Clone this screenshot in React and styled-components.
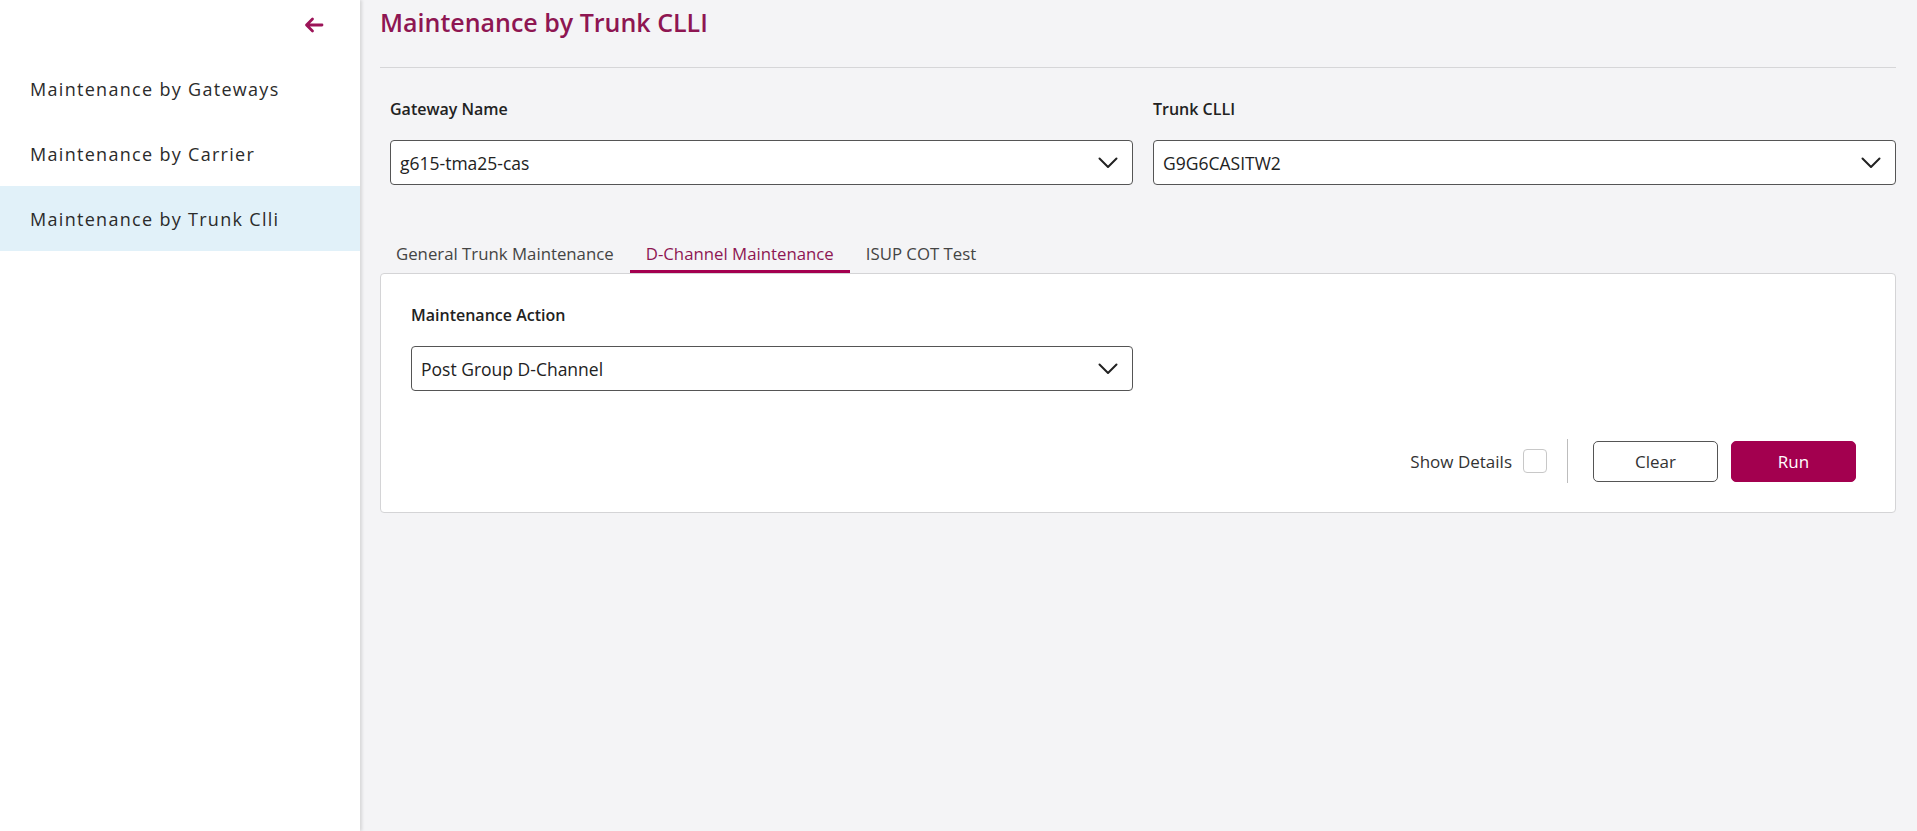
import React from 'react';
import styled, { createGlobalStyle } from 'styled-components';

const GlobalStyle = createGlobalStyle`
    html, body {
        margin: 0;
        padding: 0;
        height: 100%;
    }
    body {
        font-family: "Open Sans", "Noto Sans", "Liberation Sans", sans-serif;
        color: #222;
    }
    #root {
        height: 100%;
    }
`

const Layout = styled.div`
    display: flex;
    height: 100vh;
    background: #f4f4f6;
`

const SideBar = styled.aside`
    width: 360px;
    flex-shrink: 0;
    background: #fff;
    box-shadow: 2px 0 3px rgba(0, 0, 0, 0.12);
    z-index: 1;
`

const SideHead = styled.div`
    height: 56px;
    display: flex;
    justify-content: flex-end;
    align-items: flex-start;
    padding: 17px 36px 0 0;
    box-sizing: border-box;
`

const BackBtn = styled.button`
    border: none;
    background: none;
    padding: 0;
    display: flex;
    cursor: pointer;
    color: #9c1458;
`

const MenuItem = styled.div`
    height: 65px;
    display: flex;
    align-items: center;
    padding-left: 30px;
    font-size: 18px;
    letter-spacing: 1.3px;
    color: #2b2b2b;
    background: ${({ active }) => (active ? '#e1f1f9' : 'transparent')};
    cursor: pointer;
`

const Main = styled.main`
    flex: 1;
    padding: 0 21px 0 20px;
    min-width: 0;
`

const Title = styled.h1`
    margin: 0;
    padding-top: 4px;
    font-size: 25px;
    line-height: 36px;
    font-weight: 600;
    color: #8e1652;
`

const Divider = styled.hr`
    margin: 27px 0 0;
    border: none;
    border-top: 1px solid #d6d6d8;
`

const FormGrid = styled.div`
    display: grid;
    grid-template-columns: 1fr 1fr;
    column-gap: 20px;
    padding: 31px 0 0 10px;
`

const Field = styled.div`
    display: flex;
    flex-direction: column;
    gap: 21px;
`

const Label = styled.label`
    font-size: 16px;
    line-height: 20px;
    font-weight: 600;
    color: #222;
`

const SelectBox = styled.div`
    height: 45px;
    box-sizing: border-box;
    border: 1px solid #555;
    border-radius: 4px;
    background: #fff;
    display: flex;
    align-items: center;
    justify-content: space-between;
    padding: 0 14px 0 9px;
    font-size: 17.5px;
    color: #222;
    width: ${({ half }) => (half ? '722px' : 'auto')};
`

const Tabs = styled.div`
    display: flex;
    margin-top: 47px;
    height: 41px;
`

const Tab = styled.div`
    padding: 5px 16px 0;
    display: flex;
    align-items: center;
    font-size: 16.8px;
    color: ${({ active }) => (active ? '#8e1652' : '#444')};
    border-bottom: 3px solid ${({ active }) => (active ? '#a3004f' : 'transparent')};
    cursor: pointer;
`

const Card = styled.section`
    background: #fff;
    border: 1px solid #d4d4d6;
    border-radius: 4px;
    padding: 31px 39px 29px 30px;
    display: flex;
    flex-direction: column;
`

const Actions = styled.div`
    display: flex;
    justify-content: flex-end;
    align-items: center;
    margin-top: 48px;
`

const CheckLabel = styled.label`
    display: flex;
    align-items: center;
    gap: 11px;
    font-size: 17px;
    color: #333;
`

const CheckBox = styled.span`
    width: 22px;
    height: 22px;
    border: 1px solid #c8c8c8;
    border-radius: 4px;
    background: #fff;
`

const VLine = styled.span`
    width: 1px;
    height: 44px;
    background: #bdbdbd;
    margin: 0 25px 0 20px;
`

const Button = styled.button`
    width: 125px;
    height: 41px;
    border-radius: 5px;
    font-family: inherit;
    font-size: 17px;
    cursor: pointer;
    border: 1px solid ${({ primary }) => (primary ? '#a3004f' : '#555')};
    background: ${({ primary }) => (primary ? '#a3004f' : '#fff')};
    color: ${({ primary }) => (primary ? '#fff' : '#333')};
    & + & {
        margin-left: 13px;
    }
`

const Chevron = () => (
    <svg width="20" height="12" viewBox="0 0 20 12" fill="none">
        <path d="M1.5 1.5 L10 10 L18.5 1.5" stroke="#222" strokeWidth="2" strokeLinecap="round" strokeLinejoin="round" />
    </svg>
)

const Select = ({ value, half }) => (
    <SelectBox half={half}>
        <span>{value}</span>
        <Chevron />
    </SelectBox>
)

const menu = ['Maintenance by Gateways', 'Maintenance by Carrier', 'Maintenance by Trunk Clli']
const tabs = ['General Trunk Maintenance', 'D-Channel Maintenance', 'ISUP COT Test']

const App = () => {
    return (
        <>
            <GlobalStyle />
            <Layout>
                <SideBar>
                    <SideHead>
                        <BackBtn>
                            <svg width="20" height="16" viewBox="0 0 20 16" fill="none">
                                <path d="M18 8 H3 M8.5 2 L2.5 8 L8.5 14" stroke="currentColor" strokeWidth="2.8" strokeLinecap="round" strokeLinejoin="round" />
                            </svg>
                        </BackBtn>
                    </SideHead>
                    {menu.map((m, i) => (
                        <MenuItem key={m} active={i === 2}>{m}</MenuItem>
                    ))}
                </SideBar>

                <Main>
                    <Title>Maintenance by Trunk CLLI</Title>
                    <Divider />

                    <FormGrid>
                        <Field>
                            <Label>Gateway Name</Label>
                            <Select value="g615-tma25-cas" />
                        </Field>
                        <Field>
                            <Label>Trunk CLLI</Label>
                            <Select value="G9G6CASITW2" />
                        </Field>
                    </FormGrid>

                    <Tabs>
                        {tabs.map((t, i) => (
                            <Tab key={t} active={i === 1}>{t}</Tab>
                        ))}
                    </Tabs>

                    <Card>
                        <Field>
                            <Label>Maintenance Action</Label>
                            <Select value="Post Group D-Channel" half />
                        </Field>
                        <Actions>
                            <CheckLabel>
                                Show Details
                                <CheckBox />
                            </CheckLabel>
                            <VLine />
                            <Button>Clear</Button>
                            <Button primary>Run</Button>
                        </Actions>
                    </Card>
                </Main>
            </Layout>
        </>
    )
}

export default App
